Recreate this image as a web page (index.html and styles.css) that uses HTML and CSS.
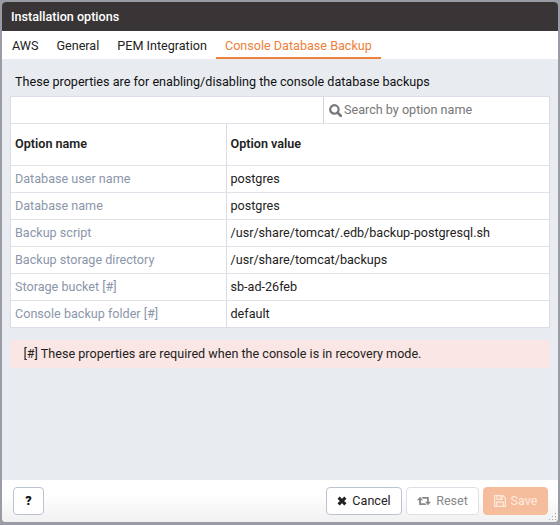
FILE: index.html
```
<!DOCTYPE html>
<html lang="en">
<head>
<meta charset="utf-8">
<title>Installation options</title>
<link rel="stylesheet" href="styles.css">
</head>
<body>
<div class="dialog">
  <div class="titlebar"><span class="t-title">Installation options</span></div>
  <nav class="tabs">
    <span class="tab">AWS</span>
    <span class="tab">General</span>
    <span class="tab">PEM Integration</span>
    <span class="tab active">Console Database Backup</span>
  </nav>
  <main class="body">
    <p class="intro"><span>These properties are for enabling/disabling the console database backups</span></p>
    <div class="panel">
      <div class="toolbar">
        <div class="search">
          <svg class="i-search" viewBox="0 0 13 13"><circle cx="5.400" cy="5.400" r="4.200" fill="none" stroke="currentColor" stroke-width="2.200"/><path d="M8.600 8.600L11.700 11.700" stroke="currentColor" stroke-width="2.700" stroke-linecap="round"/></svg>
          <span>Search by option name</span>
        </div>
      </div>
      <div class="row head"><div><span>Option name</span></div><div><span>Option value</span></div></div>
      <div class="row"><div><span>Database user name</span></div><div><span>postgres</span></div></div>
      <div class="row"><div><span>Database name</span></div><div><span>postgres</span></div></div>
      <div class="row"><div><span>Backup script</span></div><div><span>/usr/share/tomcat/.edb/backup-postgresql.sh</span></div></div>
      <div class="row"><div><span>Backup storage directory</span></div><div><span>/usr/share/tomcat/backups</span></div></div>
      <div class="row"><div><span>Storage bucket [#]</span></div><div><span>sb-ad-26feb</span></div></div>
      <div class="row"><div><span>Console backup folder [#]</span></div><div><span>default</span></div></div>
    </div>
    <div class="note"><span>[#] These properties are required when the console is in recovery mode.</span></div>
  </main>
  <footer class="footer">
    <button class="btn help">?</button>
    <button class="btn cancel"><svg class="i-x" viewBox="0 0 10 10"><path d="M1.600 1.600L8.400 8.400M8.400 1.600L1.600 8.400" stroke="currentColor" stroke-width="3"/></svg><span>Cancel</span></button>
    <button class="btn reset"><svg class="i-reset" viewBox="0 0 14 10"><path d="M0 4.300L3 .8L6 4.300H4V7.200H8L9.500 9H2.200V4.300zM14 5.700L11 9.200L8 5.700H10V2.800H6L4.500 1H11.800V5.700z" fill="currentColor"/></svg><span>Reset</span></button>
    <button class="btn save"><svg class="i-save" viewBox="0 0 12 12"><path d="M.6 .6H8.800L11.400 3.200V11.400H.6zM3 .8V4.300H8V.8M2.700 11.200V7.200H9.300V11.200M6.500 1.500V3.500" fill="none" stroke="currentColor" stroke-width="1.2"/></svg><span>Save</span></button>
    <svg class="grip" viewBox="0 0 8 8"><path d="M6 0h1v1h-1zM3 3h1v1h-1zM6 3h1v1h-1zM0 6h1v1h-1zM3 6h1v1h-1zM6 6h1v1h-1z" fill="#aaa"/></svg>
  </footer>
</div>
</body>
</html>
```
FILE: styles.css
```
* { box-sizing: border-box; }
body {
  margin: 0;
  width: 560px;
  height: 525px;
  padding: 2px 2px 3px;
  overflow: hidden;
  background: #999ba5;
  font: 12.6px/18px Roboto, sans-serif;
  color: #222;
}
.dialog {
  height: 520px;
  display: flex;
  flex-direction: column;
  border-radius: 4px;
  overflow: hidden;
  background: #e8ecf1;
}
.titlebar {
  height: 29px;
  padding: 6px 9px;
  background: #393536;
  color: #fff;
  font-weight: 500;
}
.tabs {
  display: flex;
  height: 28px;
  padding-left: 1px;
  background: #fff;
}
.tab { padding: 6px 9px 0; white-space: nowrap; }
.tab.active { color: #ed803a; border-bottom: 2px solid #ed803a; }
.body { flex: 1; padding: 0 8px; }
.intro { margin: 0; height: 37px; padding: 14px 5px 0; color: #111; }
.panel {
  border: 1px solid #d9dee7;
  background: #fff;
}
.toolbar { height: 26px; display: flex; justify-content: flex-end; }
.search {
  width: 226px;
  border-left: 1px solid #cfd3da;
  padding: 4px 0 0 5px;
  color: #777;
  display: flex;
  gap: 2px;
}
.i-search { width: 13px; height: 13px; margin-top: 3px; }
.row {
  display: grid;
  grid-template-columns: 215px 1fr;
  height: 27px;
  border-top: 1px solid #dfe3ea;
}
.row > div { padding: 4px 4px 0; }
.row > div + div { padding-left: 3.5px; border-left: 1px solid #d9dce8; }
.row > div:first-child { color: #8b96aa; }
.row.head { height: 42px; font-weight: 600; }
.row.head > div { padding-top: 11px; color: #222; }
.note {
  margin-top: 12px;
  height: 28px;
  padding: 5px 13.5px;
  border-radius: 4px;
  background: #fae6e4;
}
.footer {
  position: relative;
  height: 42px;
  display: flex;
  align-items: center;
  padding: 0 10px 0 11px;
  gap: 4px;
  background: linear-gradient(#fff 30%, #f1f1f2);
}
.btn {
  height: 28px;
  margin: 0;
  padding: 0;
  display: flex;
  align-items: center;
  justify-content: center;
  gap: 5px;
  font: 12.6px/18px Roboto, sans-serif;
  color: #222;
  background: #fff;
  border: 1px solid #bac3d1;
  border-radius: 4px;
}
.help { width: 31px; margin-right: auto; font-weight: 900; color: #111; }
.cancel { width: 76px; }
.reset { width: 73px; color: #888; border-color: #dce1e8; }
.save { width: 65px; color: #fdeadf; background: #f6bd9c; border-color: #f6bd9c; }
.i-x { width: 10px; height: 10px; }
.i-reset { width: 14px; height: 10px; }
.i-save { width: 12px; height: 12px; }
.grip { position: absolute; right: 1px; bottom: 1px; width: 8px; height: 8px; }
```
